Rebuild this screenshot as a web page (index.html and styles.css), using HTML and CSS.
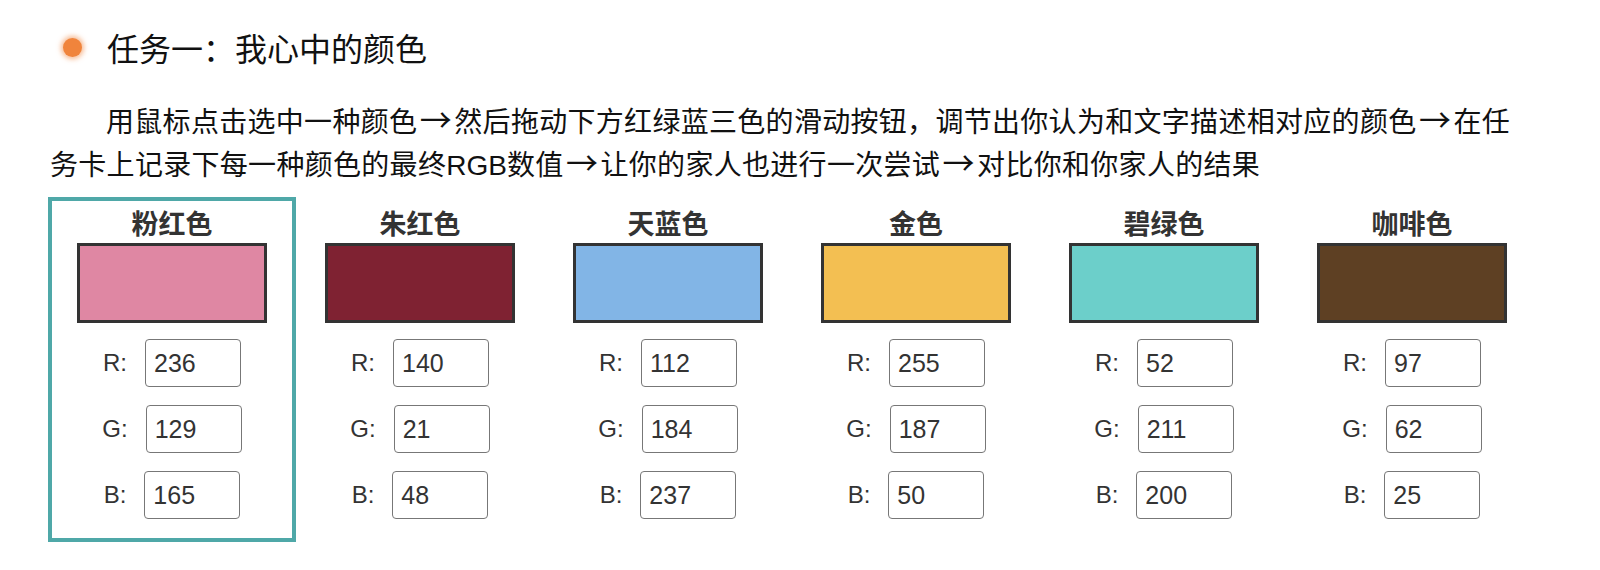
FILE: index.html
```html
<!DOCTYPE html>
<html lang="zh-CN">
<head>
<meta charset="utf-8">
<title>任务一：我心中的颜色</title>
<link rel="stylesheet" href="styles.css">
</head>
<body>
<main class="page">
  <header class="task-head">
    <span class="dot"></span>
    <h1 class="task-title">任务一：我心中的颜色</h1>
  </header>
  <p class="task-desc">用鼠标点击选中一种颜色<span class="arrow">→</span>然后拖动下方红绿蓝三色的滑动按钮，调节出你认为和文字描述相对应的颜色<span class="arrow">→</span>在任务卡上记录下每一种颜色的最终<span class="latin">RGB</span>数值<span class="arrow">→</span>让你的家人也进行一次尝试<span class="arrow">→</span>对比你和你家人的结果</p>
  <section class="cards">
    <div class="card selected">
      <div class="card-name">粉红色</div>
      <div class="swatch pink"></div>
      <div class="fields">
        <label class="field"><span class="lbl">R:</span><input class="val" value="236"></label>
        <label class="field"><span class="lbl">G:</span><input class="val" value="129"></label>
        <label class="field"><span class="lbl">B:</span><input class="val" value="165"></label>
      </div>
    </div>
    <div class="card">
      <div class="card-name">朱红色</div>
      <div class="swatch vermilion"></div>
      <div class="fields">
        <label class="field"><span class="lbl">R:</span><input class="val" value="140"></label>
        <label class="field"><span class="lbl">G:</span><input class="val" value="21"></label>
        <label class="field"><span class="lbl">B:</span><input class="val" value="48"></label>
      </div>
    </div>
    <div class="card">
      <div class="card-name">天蓝色</div>
      <div class="swatch sky"></div>
      <div class="fields">
        <label class="field"><span class="lbl">R:</span><input class="val" value="112"></label>
        <label class="field"><span class="lbl">G:</span><input class="val" value="184"></label>
        <label class="field"><span class="lbl">B:</span><input class="val" value="237"></label>
      </div>
    </div>
    <div class="card">
      <div class="card-name">金色</div>
      <div class="swatch gold"></div>
      <div class="fields">
        <label class="field"><span class="lbl">R:</span><input class="val" value="255"></label>
        <label class="field"><span class="lbl">G:</span><input class="val" value="187"></label>
        <label class="field"><span class="lbl">B:</span><input class="val" value="50"></label>
      </div>
    </div>
    <div class="card">
      <div class="card-name">碧绿色</div>
      <div class="swatch jade"></div>
      <div class="fields">
        <label class="field"><span class="lbl">R:</span><input class="val" value="52"></label>
        <label class="field"><span class="lbl">G:</span><input class="val" value="211"></label>
        <label class="field"><span class="lbl">B:</span><input class="val" value="200"></label>
      </div>
    </div>
    <div class="card">
      <div class="card-name">咖啡色</div>
      <div class="swatch coffee"></div>
      <div class="fields">
        <label class="field"><span class="lbl">R:</span><input class="val" value="97"></label>
        <label class="field"><span class="lbl">G:</span><input class="val" value="62"></label>
        <label class="field"><span class="lbl">B:</span><input class="val" value="25"></label>
      </div>
    </div>
  </section>
</main>
</body>
</html>
```
FILE: styles.css
```css
* { box-sizing: border-box; }
html, body { margin: 0; padding: 0; background: #fff; }
body {
  font-family: "Noto Sans CJK SC", "Noto Sans", sans-serif;
  color: #111;
}
.page {
  padding: 27px 0 0 48px;
}
.task-head {
  display: flex;
  align-items: center;
  height: 40px;
  padding-left: 15px;
}
.dot {
  width: 19px;
  height: 19px;
  border-radius: 50%;
  background: #f0843c;
  box-shadow: 0 0 5px 2px rgba(240, 132, 60, 0.55);
  flex: none;
}
.task-title {
  margin: 0 0 0 25px;
  font-size: 32px;
  font-weight: 400;
  line-height: 40px;
  color: #111;
}
.task-desc {
  margin: 31px 0 0 2px;
  width: 1478px;
  font-size: 28px;
  line-height: 41px;
  letter-spacing: 0.3px;
  text-indent: 2em;
  color: #111;
}
.arrow {
  display: inline-block;
  width: 37px;
  text-align: center;
  text-indent: 0;
  font-family: "Noto Sans CJK SC", sans-serif;
  font-size: 32px;
  line-height: 41px;
  letter-spacing: 0;
}
.latin {
  font-family: "Liberation Sans", sans-serif;
  letter-spacing: 0;
}
.cards {
  display: flex;
  margin-top: 11px;
}
.card {
  width: 248px;
  flex: none;
  border: 4px solid transparent;
  padding: 5px 25px 19px;
  display: flex;
  flex-direction: column;
  align-items: center;
}
.card.selected {
  border-color: #4fa8a8;
}
.card-name {
  font-size: 27px;
  font-weight: 700;
  line-height: 34px;
  color: #333;
}
.swatch {
  margin-top: 3px;
  width: 190px;
  height: 80px;
  border: 3px solid #333;
}
.pink { background: #df87a3; }
.vermilion { background: #7f2232; }
.sky { background: #82b5e6; }
.gold { background: #f3bf52; }
.jade { background: #6ccfca; }
.coffee { background: #5e4023; }
.fields {
  margin-top: 16px;
  display: flex;
  flex-direction: column;
  gap: 18px;
  align-items: center;
}
.field {
  display: flex;
  align-items: center;
  gap: 18px;
  font-family: "Liberation Sans", sans-serif;
}
.lbl {
  font-size: 24px;
  color: #333;
}
.val {
  width: 96px;
  height: 48px;
  border: 1px solid #777;
  border-radius: 4px;
  padding: 0 0 0 8px;
  font-family: "Liberation Sans", sans-serif;
  font-size: 25px;
  color: #333;
  background: #fff;
  outline: none;
}
```
